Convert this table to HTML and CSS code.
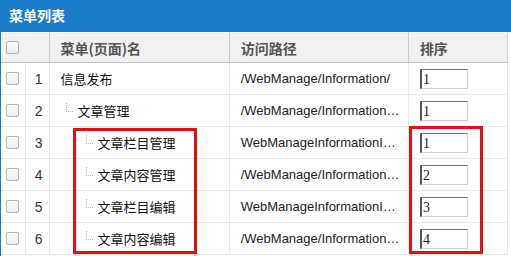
FILE: index.html
```html
<!DOCTYPE html>
<html lang="zh">
<head>
<meta charset="utf-8">
<title>菜单列表</title>
<link rel="stylesheet" href="styles.css">
</head>
<body>
<div class="panel">
  <div class="panel-title">菜单列表</div>
  <table class="grid">
    <colgroup>
      <col class="c-cb"><col class="c-no"><col class="c-name"><col class="c-path"><col class="c-sort">
    </colgroup>
    <thead>
      <tr>
        <th colspan="2" class="th-cb"><span class="cb"></span></th>
        <th>菜单(页面)名</th>
        <th>访问路径</th>
        <th>排序</th>
      </tr>
    </thead>
    <tbody>
      <tr>
        <td class="td-cb"><span class="cb"></span></td><td class="td-no">1</td>
        <td class="name">信息发布</td>
        <td class="path">/WebManage/Information/</td>
        <td class="sort"><span class="inp">1</span></td>
      </tr>
      <tr>
        <td class="td-cb"><span class="cb"></span></td><td class="td-no">2</td>
        <td class="name lv1"><span class="tree"></span>文章管理</td>
        <td class="path">/WebManage/Information/Article/</td>
        <td class="sort"><span class="inp">1</span></td>
      </tr>
      <tr>
        <td class="td-cb"><span class="cb"></span></td><td class="td-no">3</td>
        <td class="name lv2"><span class="tree"></span>文章栏目管理</td>
        <td class="path">WebManageInformationIArticleClass</td>
        <td class="sort"><span class="inp">1</span></td>
      </tr>
      <tr>
        <td class="td-cb"><span class="cb"></span></td><td class="td-no">4</td>
        <td class="name lv2"><span class="tree"></span>文章内容管理</td>
        <td class="path">/WebManage/Information/Article/List</td>
        <td class="sort"><span class="inp">2</span></td>
      </tr>
      <tr>
        <td class="td-cb"><span class="cb"></span></td><td class="td-no">5</td>
        <td class="name lv2"><span class="tree"></span>文章栏目编辑</td>
        <td class="path">WebManageInformationIArticleEdit</td>
        <td class="sort"><span class="inp">3</span></td>
      </tr>
      <tr>
        <td class="td-cb"><span class="cb"></span></td><td class="td-no">6</td>
        <td class="name lv2"><span class="tree"></span>文章内容编辑</td>
        <td class="path">/WebManage/Information/Article/Edit</td>
        <td class="sort"><span class="inp">4</span></td>
      </tr>
    </tbody>
  </table>
  <div class="mark mark-name"></div>
  <div class="mark mark-sort"></div>
</div>
</body>
</html>
```
FILE: styles.css
```css
html, body {
  margin: 0;
  padding: 0;
  background: #fff;
}
body {
  font-family: "Liberation Sans", Arial, "Noto Sans CJK SC", sans-serif;
  font-size: 13px;
  color: #222;
}
.panel {
  position: relative;
  width: 511px;
  height: 256px;
  overflow: hidden;
  border-left: 1px solid #1a7bc9;
  box-sizing: border-box;
}
.panel-title {
  height: 32px;
  line-height: 30px;
  background: #1a7bc9;
  color: #fff;
  font-family: "Noto Sans CJK SC", sans-serif;
  font-weight: bold;
  font-size: 14px;
  padding-left: 9px;
  margin-left: -1px;
}
.grid {
  border-collapse: collapse;
  table-layout: fixed;
  width: 507px;
  border-right: 1px solid #c9c9c9;
}
.c-cb { width: 24px; }
.c-no { width: 24px; }
.c-name { width: 180px; }
.c-path { width: 179px; }
.c-sort { width: 99px; }
.grid th {
  height: 29px;
  background: #f1f1f1;
  border-top: 1px solid #fff;
  border-bottom: 1px solid #c4c4c4;
  border-right: 1px solid #cfcfcf;
  text-align: left;
  padding: 0 0 0 11px;
  font-family: "Noto Sans CJK SC", sans-serif;
  font-size: 14px;
  font-weight: bold;
  color: #555;
}
.grid th.th-cb {
  padding-left: 5px;
}
.grid td {
  height: 31px;
  border-bottom: 1px solid #e8e8e8;
  border-right: 1px solid #e8e8e8;
  padding: 0 0 0 11px;
  white-space: nowrap;
  overflow: hidden;
  text-overflow: ellipsis;
}
.grid td.td-cb {
  padding-left: 5px;
}
.grid td.td-no {
  padding: 0 6px 0 0;
  text-align: right;
  color: #333;
  font-size: 14px;
}
.cb {
  display: block;
  width: 11px;
  height: 11px;
  border: 1px solid #b5b5b5;
  border-radius: 2px;
  background: linear-gradient(#fdfdfd, #ececec);
}
.name {
  font-family: "Noto Sans CJK SC", sans-serif;
  font-size: 13px;
  color: #111;
}
.grid td.lv1 { padding-left: 16px; }
.grid td.lv2 { padding-left: 36px; }
.tree {
  display: inline-block;
  width: 6px;
  height: 8px;
  border-left: 1px dotted #b8b8b8;
  border-bottom: 1px dotted #b8b8b8;
  margin-right: 5px;
  vertical-align: 4px;
}
.grid td.path {
  color: #222;
  padding-right: 8px;
}
.grid td.sort {
  padding-left: 11px;
}
.inp {
  display: block;
  width: 44px;
  height: 18px;
  line-height: 19px;
  border-style: solid;
  border-width: 1px 1px 1px 2px;
  border-color: #737373 #d0d0d0 #d0d0d0 #555;
  background: #fff;
  font-family: "Liberation Serif", "Times New Roman", serif;
  font-size: 14px;
  color: #222;
  padding-left: 1px;
}
.mark {
  position: absolute;
  border: 3px solid #e01010;
  box-sizing: border-box;
}
.mark-name {
  left: 72px;
  top: 128px;
  width: 124px;
  height: 126px;
}
.mark-sort {
  left: 408px;
  top: 126px;
  width: 74px;
  height: 128px;
}
```
